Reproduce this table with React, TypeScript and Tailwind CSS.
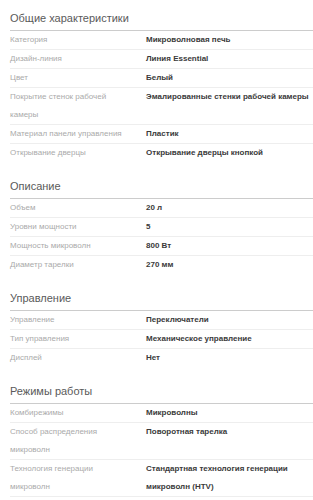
import React from 'react';

type Spec = { label: string; value: string };
type Section = { title: string; rows: Spec[] };

const sections: Section[] = [
  {
    title: 'Общие характеристики',
    rows: [
      { label: 'Категория', value: 'Микроволновая печь' },
      { label: 'Дизайн-линия', value: 'Линия Essential' },
      { label: 'Цвет', value: 'Белый' },
      { label: 'Покрытие стенок рабочей камеры', value: 'Эмалированные стенки рабочей камеры' },
      { label: 'Материал панели управления', value: 'Пластик' },
      { label: 'Открывание дверцы', value: 'Открывание дверцы кнопкой' },
    ],
  },
  {
    title: 'Описание',
    rows: [
      { label: 'Объем', value: '20 л' },
      { label: 'Уровни мощности', value: '5' },
      { label: 'Мощность микроволн', value: '800 Вт' },
      { label: 'Диаметр тарелки', value: '270 мм' },
    ],
  },
  {
    title: 'Управление',
    rows: [
      { label: 'Управление', value: 'Переключатели' },
      { label: 'Тип управления', value: 'Механическое управление' },
      { label: 'Дисплей', value: 'Нет' },
    ],
  },
  {
    title: 'Режимы работы',
    rows: [
      { label: 'Комбирежимы', value: 'Микроволны' },
      { label: 'Способ распределения микроволн', value: 'Поворотная тарелка' },
      { label: 'Технология генерации микроволн', value: 'Стандартная технология генерации микроволн (HTV)' },
    ],
  },
];

const App: React.FC = () => {
  return (
    <div className="w-[313px] h-[500px] overflow-hidden bg-white pl-[10px] font-['Liberation_Sans',Arial,sans-serif]">
      {sections.map((section, idx) => (
        <div key={idx} className={idx === 0 ? '' : 'mt-[6px]'}>
          <h3 className="pt-[10px] pb-[4px] text-[11px] leading-[16px] font-normal text-[#5a5a5a] border-b border-[#cccccc]">
            {section.title}
          </h3>
          <div
            className={
              idx === sections.length - 1
                ? 'divide-y divide-[#eeeeee] border-b border-[#eeeeee]'
                : 'divide-y divide-[#eeeeee]'
            }
          >
            {section.rows.map((row, i) => (
              <div key={i} className="grid grid-cols-[136px_1fr] text-[8px] leading-[18px]">
                <div className="pr-[16px] text-[#aaaaaa]">{row.label}</div>
                <div className="font-bold text-[#3a3a3a]">{row.value}</div>
              </div>
            ))}
          </div>
        </div>
      ))}
    </div>
  );
};

export default App;
